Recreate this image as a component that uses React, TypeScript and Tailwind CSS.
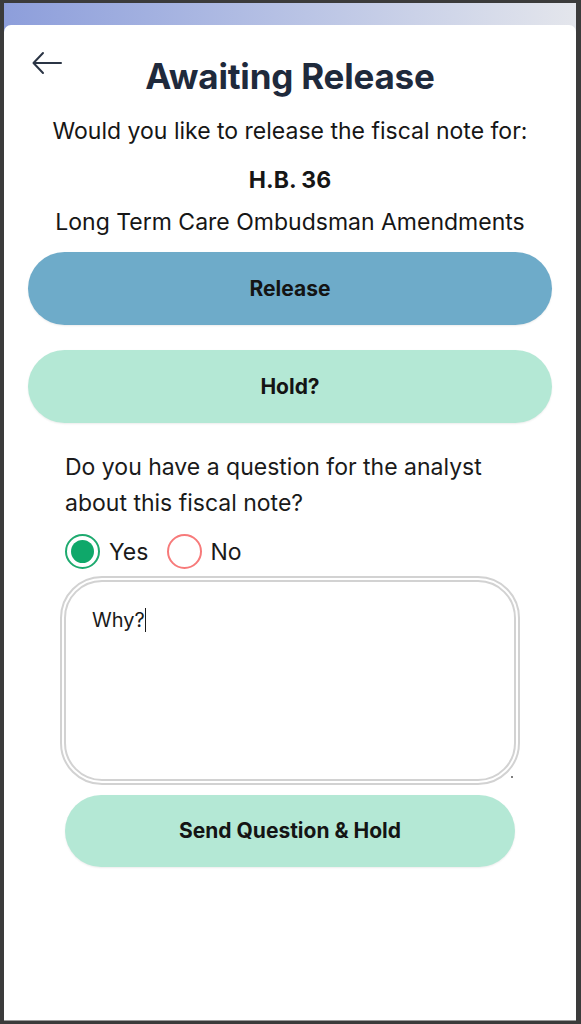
import React from "react";

export default function App() {
  return (
    <div
      className="h-[1024px] w-[581px] bg-[#3b3b3b] pt-[3px] pl-[4px] pr-[5px] pb-[3px]"
      style={{ fontFamily: "Inter, 'Noto Sans', sans-serif" }}
    >
      <div className="flex h-full flex-col bg-linear-to-r from-[#8d9edb] to-[#e4e6ec]">
        <div className="relative mt-[22px] flex flex-1 flex-col rounded-t-[7px] border-b border-[#9a9a9a] bg-white px-[24px] pt-[29px]">
          <button className="absolute left-[26px] top-[24px] text-[#2b3545]" aria-label="Back">
            <svg width="34" height="28" viewBox="0 0 34 28" fill="none" stroke="currentColor" strokeWidth="2" strokeLinecap="round" strokeLinejoin="round">
              <path d="M31 14H4" />
              <path d="M13 4L3.5 14L13 24" />
            </svg>
          </button>
          <h1 className="text-center text-[35px] font-bold leading-[44px] tracking-[-0.2px] text-[#1f2a3c]">
            Awaiting Release
          </h1>
          <p className="mt-[18px] text-center text-[23px] leading-[30px] text-[#161616]">
            Would you like to release the fiscal note for:
          </p>
          <p className="mt-[19px] text-center text-[23px] font-bold leading-[30px] text-[#161616]">
            H.B. 36
          </p>
          <p className="mt-[12px] text-center text-[23px] leading-[30px] text-[#161616]">
            Long Term Care Ombudsman Amendments
          </p>

          <button className="mt-[15px] h-[73px] w-full rounded-full bg-[#6eabc9] text-[21px] font-bold text-[#141414] shadow-[0_1px_2px_rgba(0,0,0,0.08)]">
            Release
          </button>
          <button className="mt-[25px] h-[73px] w-full rounded-full bg-[#b4e8d5] text-[21px] font-bold text-[#141414] shadow-[0_1px_2px_rgba(0,0,0,0.08)]">
            Hold?
          </button>

          <div className="mx-auto mt-[26px] flex w-[460px] flex-col">
            <p className="pl-[5px] text-[23px] leading-[36px] text-[#1a1a1a]">
              Do you have a question for the analyst about this fiscal note?
            </p>
            <div className="mt-[13px] flex items-center pl-[5px]">
              <span className="flex h-[35px] w-[35px] items-center justify-center rounded-full border-2 border-[#1eaa6f]">
                <span className="h-[23px] w-[23px] rounded-full bg-[#0fa86a]" />
              </span>
              <span className="ml-[9px] text-[23px] leading-[30px] text-[#1a1a1a]">Yes</span>
              <span className="ml-[19px] h-[35px] w-[35px] rounded-full border-2 border-[#f77a7a]" />
              <span className="ml-[8px] text-[23px] leading-[30px] text-[#1a1a1a]">No</span>
            </div>
            <div className="relative mt-[7px]">
              <div className="h-[209px] w-[460px] rounded-[42px] border-[6px] border-double border-[#d2d2d2] px-[26px] pt-[21px]">
                <span className="text-[20px] leading-[26px] text-[#1a1a1a]">
                  Why?<span className="inline-block h-[24px] w-px translate-y-[5px] bg-[#1a1a1a]" />
                </span>
              </div>
              <span className="absolute right-[7px] bottom-[7px] h-[2px] w-[2px] rounded-full bg-[#555]" />
            </div>
            <button className="mx-[5px] mt-[10px] h-[72px] rounded-full bg-[#b4e8d5] text-[21px] font-bold text-[#141414] shadow-[0_1px_2px_rgba(0,0,0,0.08)]">
              Send Question &amp; Hold
            </button>
          </div>
        </div>
      </div>
    </div>
  );
}
